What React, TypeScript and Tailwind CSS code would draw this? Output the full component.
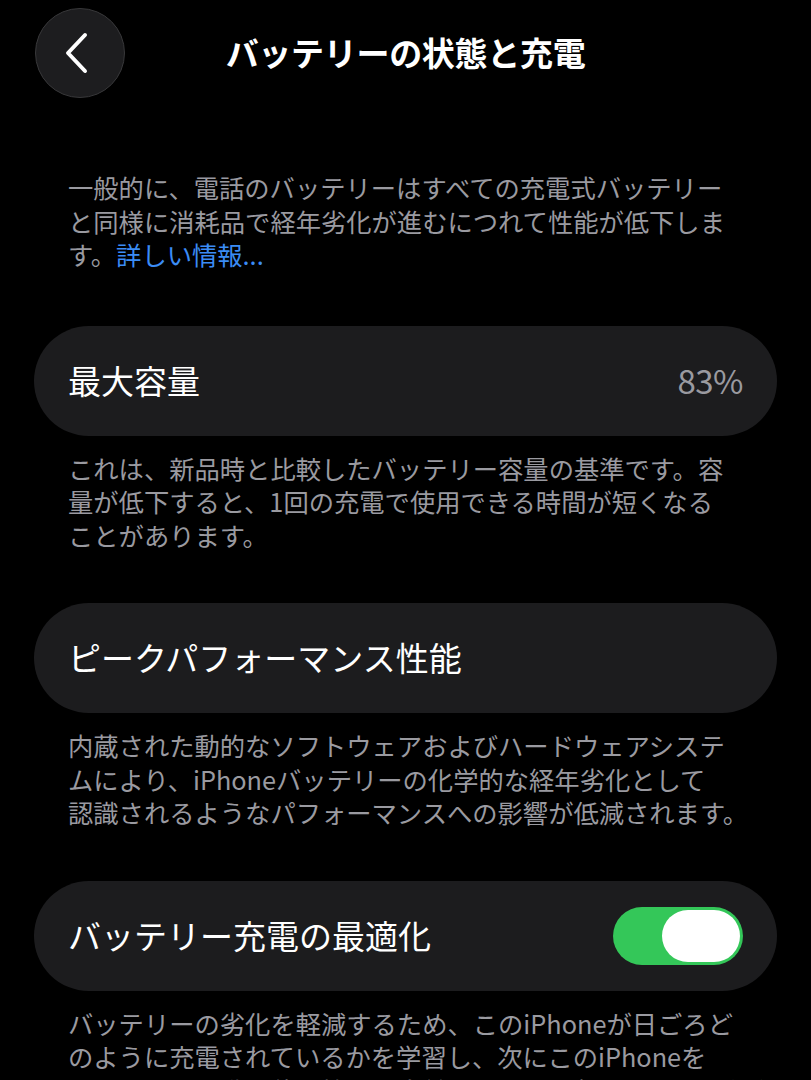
import React from 'react';

const jp = '"Noto Sans CJK JP", "Noto Sans", sans-serif';

function Caption({ lines }: { lines: React.ReactNode[] }) {
  return (
    <div className="mt-[16px] px-[68px] text-[25.3px] leading-[33.5px] text-[#9a9aa0]">
      {lines.map((l, i) => (
        <div key={i} className="whitespace-nowrap">{l}</div>
      ))}
    </div>
  );
}

function Card({ children }: { children: React.ReactNode }) {
  return (
    <div className="mx-[34px] h-[110px] rounded-full bg-[#1c1c1e] pl-[34px] pr-[34px] flex items-center justify-between">
      {children}
    </div>
  );
}

export default function App() {
  return (
    <div className="w-[811px] h-[1080px] overflow-hidden bg-black text-white" style={{ fontFamily: jp }}>
      {/* header */}
      <div className="pt-[8px] px-[35px] grid grid-cols-[90px_1fr_90px] items-center">
        <button className="w-[90px] h-[90px] rounded-full bg-[#1d1d1f] border border-[#38383a] flex items-center justify-center">
          <svg width="26" height="44" viewBox="0 0 26 44" className="-ml-[6px]">
            <path d="M21 4 L4 22 L21 40" fill="none" stroke="white" strokeWidth="4" strokeLinecap="round" strokeLinejoin="round" />
          </svg>
        </button>
        <div className="text-center text-[33px] font-bold tracking-[-0.3px]">バッテリーの状態と充電</div>
        <div />
      </div>

      {/* intro */}
      <div className="mt-[73px] px-[68px] text-[25.3px] leading-[33.5px] text-[#9a9aa0]">
        <div className="whitespace-nowrap">一般的に、電話のバッテリーはすべての充電式バッテリー</div>
        <div className="whitespace-nowrap">と同様に消耗品で経年劣化が進むにつれて性能が低下しま</div>
        <div className="whitespace-nowrap">す。<span className="text-[#3b8cf5]">詳しい情報...</span></div>
      </div>

      <div className="mt-[54px]">
        <Card>
          <span className="text-[33px]">最大容量</span>
          <span className="text-[33px] tracking-[-0.5px] text-[#9a9aa0]">83%</span>
        </Card>
      </div>
      <Caption
        lines={[
          'これは、新品時と比較したバッテリー容量の基準です。容',
          '量が低下すると、1回の充電で使用できる時間が短くなる',
          'ことがあります。',
        ]}
      />

      <div className="mt-[51px]">
        <Card>
          <span className="text-[33px]">ピークパフォーマンス性能</span>
        </Card>
      </div>
      <Caption
        lines={[
          '内蔵された動的なソフトウェアおよびハードウェアシステ',
          'ムにより、iPhoneバッテリーの化学的な経年劣化として',
          '認識されるようなパフォーマンスへの影響が低減されます。',
        ]}
      />

      <div className="mt-[51px]">
        <Card>
          <span className="text-[33px]">バッテリー充電の最適化</span>
          <div className="w-[130px] h-[58px] rounded-full bg-[#34c759] p-[3px] flex justify-end">
            <div className="w-[78px] h-[52px] rounded-full bg-white" />
          </div>
        </Card>
      </div>
      <Caption
        lines={[
          'バッテリーの劣化を軽減するため、このiPhoneが日ごろど',
          'のように充電されているかを学習し、次にこのiPhoneを',
          'バッテリー駆動で使い始める直前まで80%を超える充電を保留',
        ]}
      />
    </div>
  );
}
